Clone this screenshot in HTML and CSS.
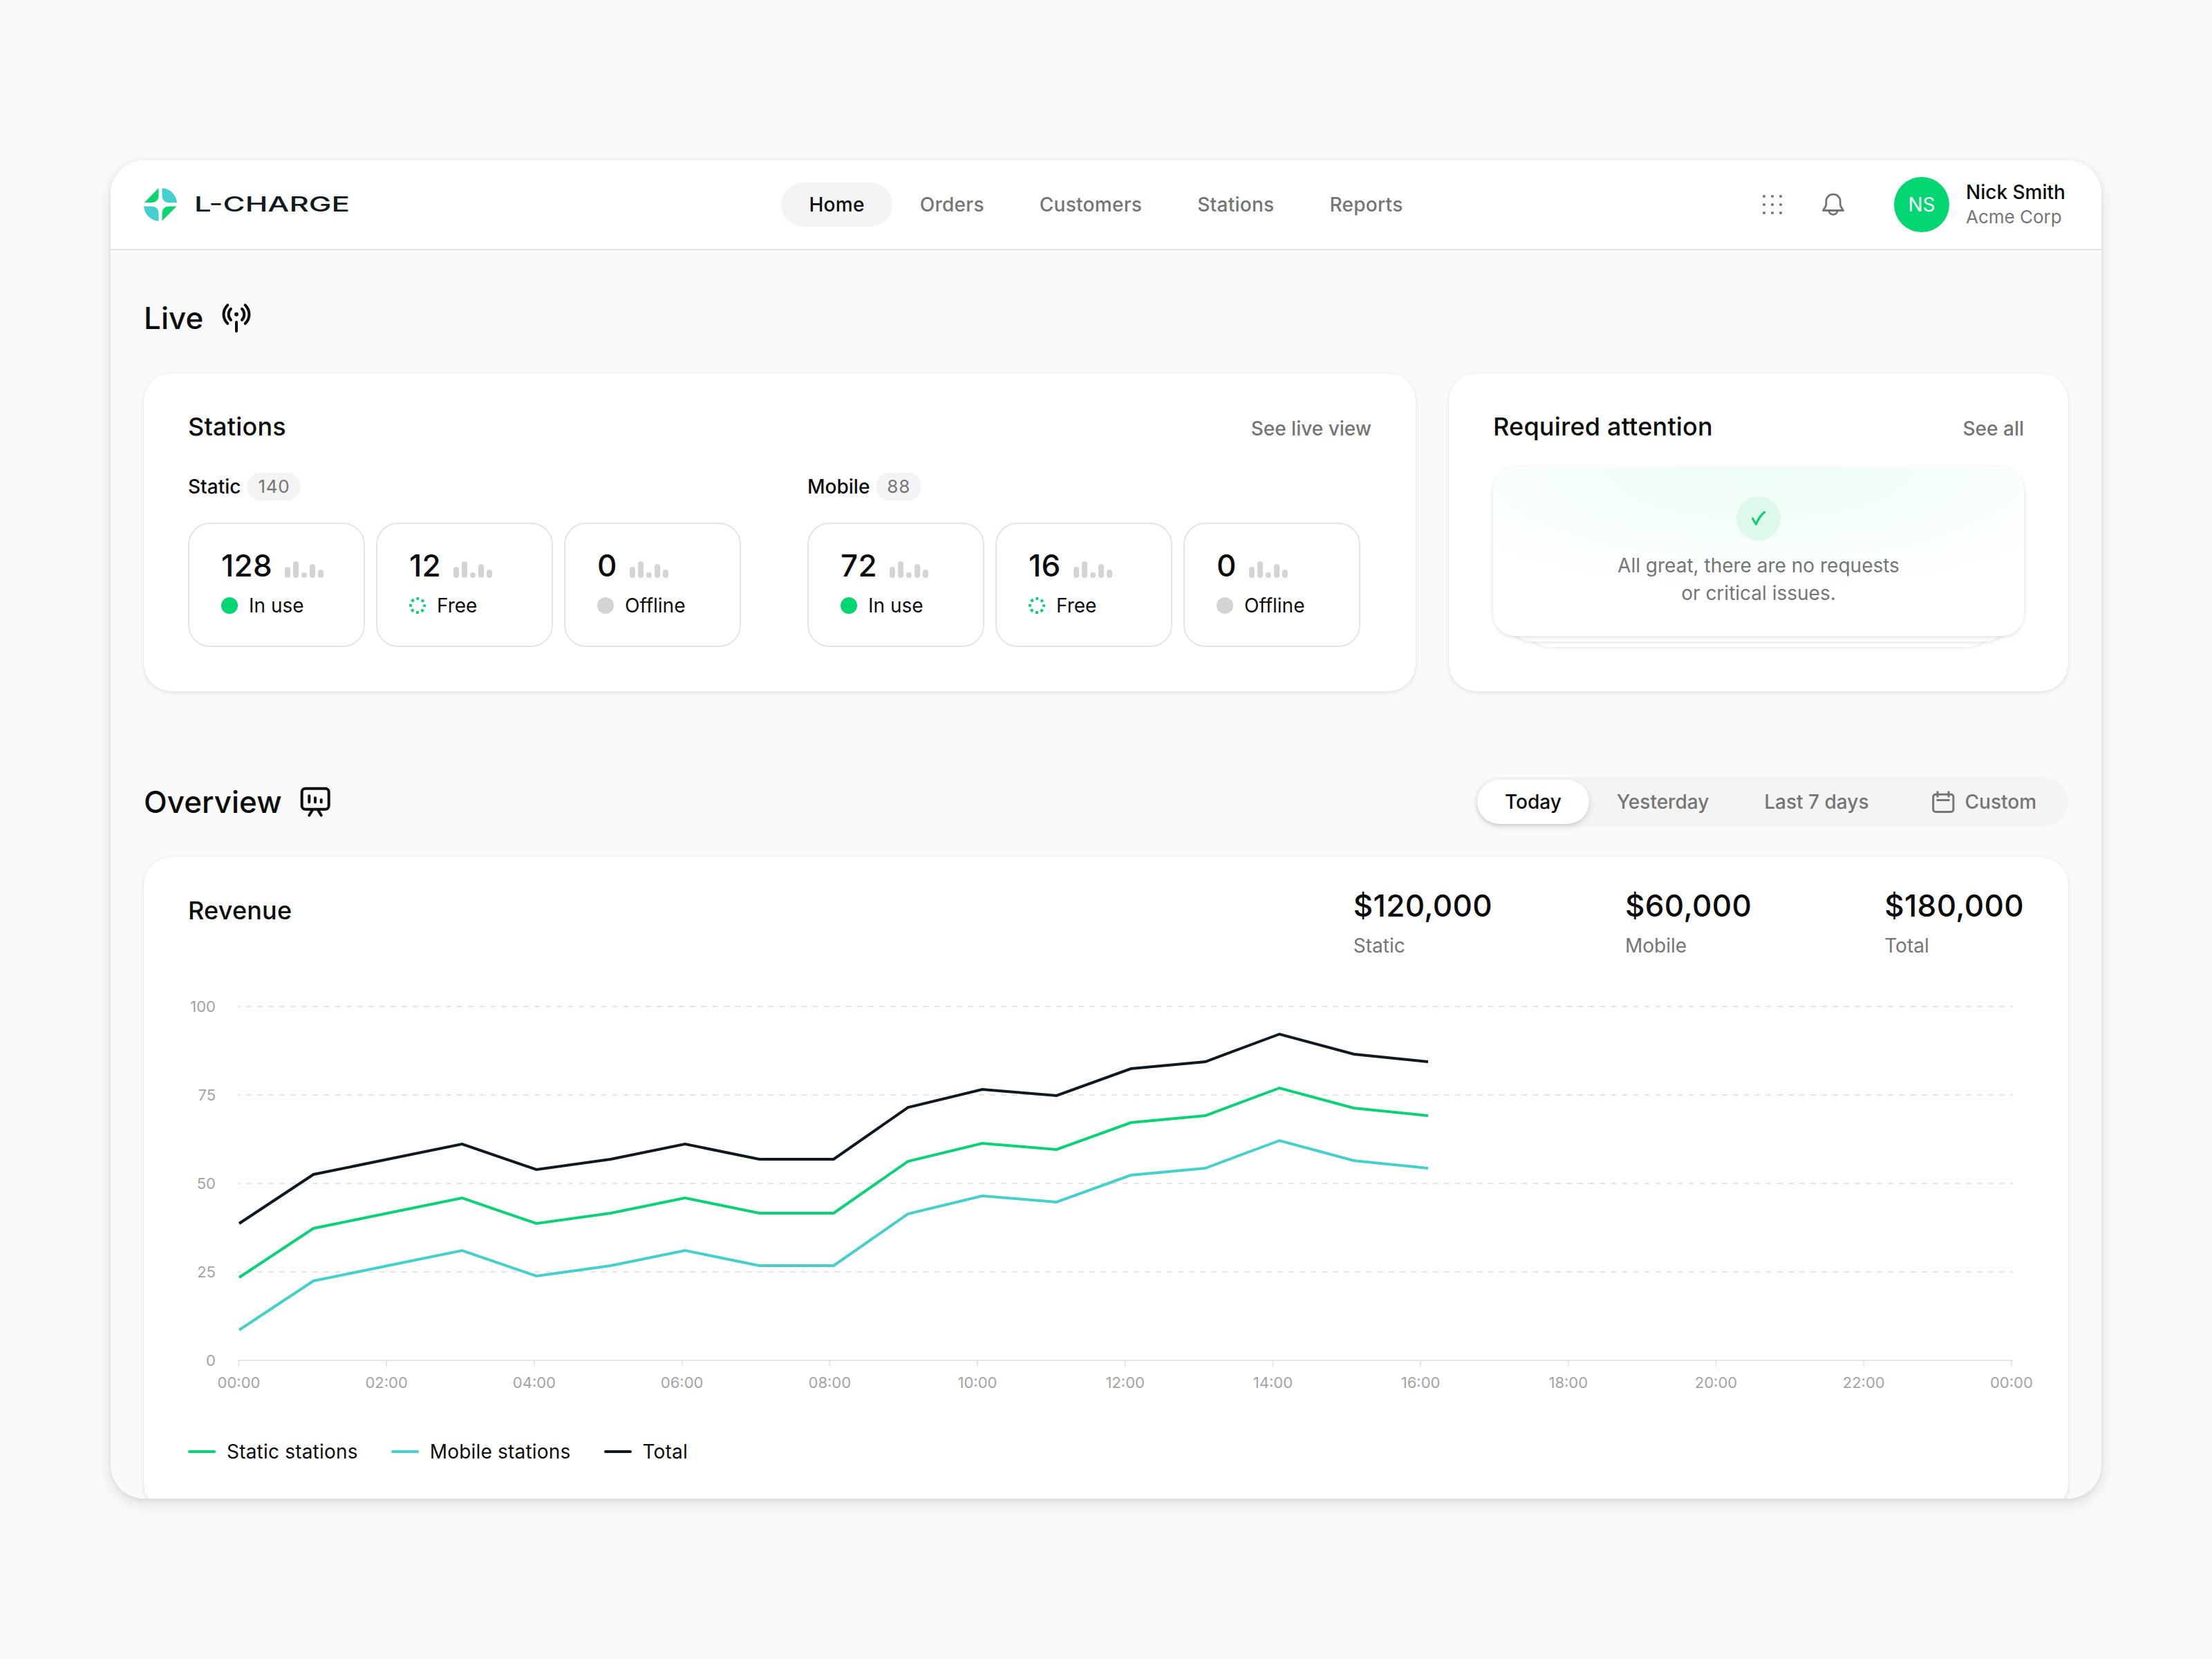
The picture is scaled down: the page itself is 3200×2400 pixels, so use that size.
FILE: index.html
```html
<!DOCTYPE html>
<html lang="en">
<head>
<meta charset="utf-8">
<title>L-Charge dashboard</title>
<link rel="stylesheet" href="styles.css">
</head>

<body>
<div class="window">

	<!-- top bar -->
	<header class="topbar">
		<a class="logo" href="#">
			<svg class="logo-mark" viewBox="0 0 48 48">
				<path fill="#0bd56f" d="M21.5 0v11c0 6-4 10-10 10H.8z"/>
				<path fill="#45d0cf" d="M26.5 0C38 .8 47.2 10 48 21.2H37c-6.5 0-10.5-4-10.5-10z"/>
				<path fill="#45d0cf" d="M0 26.5h11c6.5 0 10.5 4 10.5 10.5v11C10 47 .8 38 0 26.5z"/>
				<path fill="#0bd56f" d="M26.5 47.5V37c0-6.5 4-10.5 10.5-10.5h10.5z"/>
			</svg>
			<svg class="logo-text" viewBox="0 0 226 32">
				<text x="0" y="27" textLength="225" lengthAdjust="spacingAndGlyphs">L-CHARGE</text>
			</svg>
		</a>
		<nav class="nav">
			<a class="nav-item active" href="#">Home</a>
			<a class="nav-item" href="#">Orders</a>
			<a class="nav-item" href="#">Customers</a>
			<a class="nav-item" href="#">Stations</a>
			<a class="nav-item" href="#">Reports</a>
		</nav>
		<div class="user">
			<svg class="icon apps" viewBox="0 0 40 40" fill="#757575">
				<circle cx="8" cy="8" r="2.1"/><circle cx="20" cy="8" r="2.1"/><circle cx="32" cy="8" r="2.1"/>
				<circle cx="8" cy="20" r="2.1"/><circle cx="20" cy="20" r="2.1"/><circle cx="32" cy="20" r="2.1"/>
				<circle cx="8" cy="32" r="2.1"/><circle cx="20" cy="32" r="2.1"/><circle cx="32" cy="32" r="2.1"/>
			</svg>
			<svg class="icon bell" viewBox="0 0 40 40" fill="none" stroke="#757575" stroke-width="2.8" stroke-linejoin="round">
				<path d="M20 5.2c-5.8 0-10.2 4.3-10.2 10v4.3c0 1.300-.3 2.2-1 3.500l-3.300 5.500h29L31.200 23c-.7-1.300-1-2.200-1-3.500v-4.300c0-5.700-4.400-10-10.200-10z"/>
				<path d="M13.8 29c.8 3.5 3.2 5.4 6.2 5.4s5.4-1.9 6.200-5.4"/>
			</svg>
			<div class="avatar">NS</div>
			<div class="user-info">
				<div class="user-name">Nick Smith</div>
				<div class="user-company">Acme Corp</div>
			</div>
		</div>
	</header>

	<main class="content">

		<!-- live -->
		<div class="section-head">
			<h1>Live</h1>
			<svg class="section-icon" viewBox="0 0 48 48" fill="none" stroke="#0c0c0d" stroke-width="4" stroke-linecap="round">
				<path d="M11.3 5.3C3.600 13 3.600 24.500 11.300 32M16 10.800c-4.400 4-4.400 12 0 16M36.700 5.300c7.700 7.700 7.700 19.200 0 26.700M32 10.800c4.400 4 4.400 12 0 16M24 30v13"/>
				<circle cx="24" cy="18.7" r="2.9" fill="#0c0c0d" stroke="none"/>
			</svg>
		</div>

		<div class="live">
			<section class="card">
				<div class="card-head">
					<h2>Stations</h2>
					<a class="link" href="#">See live view</a>
				</div>
				<div class="groups">
					<div class="group">
						<div class="group-label">Static <span class="count">140</span></div>
						<div class="tiles">
							<div class="tile">
								<div class="tile-value">128 <span class="bars"><i class="b4"></i><i class="b6"></i><i class="b2"></i><i class="b5"></i><i class="b3"></i></span></div>
								<div class="tile-status"><span class="dot green"></span>In use</div>
							</div>
							<div class="tile">
								<div class="tile-value">12 <span class="bars"><i class="b4"></i><i class="b6"></i><i class="b2"></i><i class="b5"></i><i class="b3"></i></span></div>
								<div class="tile-status"><svg class="ring" viewBox="0 0 24 24"><circle cx="12" cy="12" r="10"/></svg>Free</div>
							</div>
							<div class="tile">
								<div class="tile-value">0 <span class="bars"><i class="b4"></i><i class="b6"></i><i class="b2"></i><i class="b5"></i><i class="b3"></i></span></div>
								<div class="tile-status"><span class="dot grey"></span>Offline</div>
							</div>
						</div>
					</div>
					<div class="group">
						<div class="group-label">Mobile <span class="count">88</span></div>
						<div class="tiles">
							<div class="tile">
								<div class="tile-value">72 <span class="bars"><i class="b4"></i><i class="b6"></i><i class="b2"></i><i class="b5"></i><i class="b3"></i></span></div>
								<div class="tile-status"><span class="dot green"></span>In use</div>
							</div>
							<div class="tile">
								<div class="tile-value">16 <span class="bars"><i class="b4"></i><i class="b6"></i><i class="b2"></i><i class="b5"></i><i class="b3"></i></span></div>
								<div class="tile-status"><svg class="ring" viewBox="0 0 24 24"><circle cx="12" cy="12" r="10"/></svg>Free</div>
							</div>
							<div class="tile">
								<div class="tile-value">0 <span class="bars"><i class="b4"></i><i class="b6"></i><i class="b2"></i><i class="b5"></i><i class="b3"></i></span></div>
								<div class="tile-status"><span class="dot grey"></span>Offline</div>
							</div>
						</div>
					</div>
				</div>
			</section>

			<section class="card">
				<div class="card-head">
					<h2>Required attention</h2>
					<a class="link" href="#">See all</a>
				</div>
				<div class="stack">
					<div class="stack-card">
						<div class="check">
							<svg viewBox="0 0 24 24" fill="none" stroke="#08cf6f" stroke-width="3" stroke-linecap="round" stroke-linejoin="round"><path d="M3.5 12.2l5 8.3C11 14 15 7.5 20.5 3"/></svg>
						</div>
						<p>All great, there are no requests<br>or critical issues.</p>
					</div>
					<div class="stack-layer second"></div>
					<div class="stack-layer third"></div>
				</div>
			</section>
		</div>

		<!-- overview -->
		<div class="section-head overview-head">
			<h1>Overview</h1>
			<svg class="section-icon" viewBox="0 0 48 48" fill="none" stroke="#0c0c0d" stroke-width="4" stroke-linecap="round">
				<rect x="4.7" y="4.7" width="39" height="30" rx="5"/>
				<path d="M15.3 15.3v9.2M24 18.3v6.2M32.7 21v3.500M19.5 36.5L15.3 43.500M28.5 36.5L32.7 43.500"/>
			</svg>
			<div class="period">
				<span class="period-item active">Today</span>
				<span class="period-item">Yesterday</span>
				<span class="period-item">Last 7 days</span>
				<span class="period-item custom">
					<svg class="icon" viewBox="0 0 40 40" fill="none" stroke="#757575" stroke-width="3">
						<rect x="5.7" y="9.3" width="29.2" height="25.2" rx="3.5"/>
						<path d="M12 4.5v9M28 4.5v9M10.5 17.5h19"/>
					</svg>Custom
				</span>
			</div>
		</div>

		<section class="card revenue">
			<div class="revenue-head">
				<h2>Revenue</h2>
				<div class="stats">
					<div class="stat"><b>$120,000</b><span>Static</span></div>
					<div class="stat"><b>$60,000</b><span>Mobile</span></div>
					<div class="stat"><b>$180,000</b><span>Total</span></div>
				</div>
			</div>

			<svg class="chart" width="2656" height="576" viewBox="0 0 2656 576">
				<path class="grid" d="M72 16H2640M72 144H2640M72 272H2640M72 400H2640"/>
				<path class="axis" d="M72 528H2640M73.5 528v9M287.2 528v9M500.9 528v9M714.6 528v9M928.3 528v9M1142 528v9M1355.7 528v9M1569.4 528v9M1783.1 528v9M1996.8 528v9M2210.5 528v9M2424.2 528v9M2637.9 528v9"/>
				<g class="ylabels">
					<text x="40" y="24">100</text>
					<text x="40" y="152">75</text>
					<text x="40" y="280">50</text>
					<text x="40" y="408">25</text>
					<text x="40" y="536">0</text>
				</g>
				<g class="xlabels">
					<text x="73.5" y="568">00:00</text>
					<text x="287.2" y="568">02:00</text>
					<text x="500.9" y="568">04:00</text>
					<text x="714.6" y="568">06:00</text>
					<text x="928.3" y="568">08:00</text>
					<text x="1142" y="568">10:00</text>
					<text x="1355.7" y="568">12:00</text>
					<text x="1569.4" y="568">14:00</text>
					<text x="1783.1" y="568">16:00</text>
					<text x="1996.8" y="568">18:00</text>
					<text x="2210.5" y="568">20:00</text>
					<text x="2424.2" y="568">22:00</text>
					<text x="2637.9" y="568">00:00</text>
				</g>
				<polyline class="line teal" points="74,484 181.5,413 289,391 396.5,369 504,406 611.5,391 719,369 826.5,391 934,391 1041.5,316 1149,290 1256.5,299 1364,260 1471.5,250 1579,210 1686.5,239 1794,250"/>
				<polyline class="line green" points="74,408 181.5,337 289,315 396.5,293 504,330 611.5,315 719,293 826.5,315 934,315 1041.5,240 1149,214 1256.5,223 1364,184 1471.5,174 1579,134 1686.5,163 1794,174"/>
				<polyline class="line black" points="74,330 181.5,259 289,237 396.5,215 504,252 611.5,237 719,215 826.5,237 934,237 1041.5,162 1149,136 1256.5,145 1364,106 1471.5,96 1579,56 1686.5,85 1794,96"/>
			</svg>

			<div class="legend">
				<span class="legend-item green">Static stations</span>
				<span class="legend-item teal">Mobile stations</span>
				<span class="legend-item black">Total</span>
			</div>
		</section>

	</main>
</div>
</body>
</html>
```
FILE: styles.css
```css
* {
	box-sizing: border-box;
}

body {
	margin: 0;
	padding: 232px 160px;
	height: 2400px;
	background: #fafafa;
	color: #0c0c0d;
	font: 28px/40px Inter, sans-serif;
}

a {
	color: inherit;
	text-decoration: none;
}

h1, h2, p {
	margin: 0;
	font-weight: 500;
}

h1 {
	font-size: 44px;
	line-height: 56px;
}

h2 {
	font-size: 36px;
	line-height: 50px;
	letter-spacing: 0.2px;
}

svg {
	display: block;
	flex: none;
}

.window {
	height: 1936px;
	overflow: hidden;
	border-radius: 48px;
	background: #fafafa;
	box-shadow: 0 8px 24px rgba(0, 0, 0, 0.1), 0 2px 6px rgba(0, 0, 0, 0.08);
}

/* top bar */
.topbar {
	display: grid;
	grid-template-columns: 1fr auto 1fr;
	align-items: center;
	height: 130px;
	padding: 0 48px;
	background: #fff;
	border-bottom: 2px solid #e5e5e5;
}

.logo {
	display: flex;
	align-items: center;
	gap: 25px;
}

.logo-mark {
	width: 48px;
	height: 48px;
}

.logo-text {
	width: 226px;
	height: 32px;
	margin-bottom: 3px;
	overflow: visible;
	font-size: 30px;
	font-weight: 500;
	fill: #101820;
}

.nav {
	display: flex;
}

.nav-item {
	padding: 12px 40px;
	border-radius: 32px;
	color: #757575;
	font-weight: 500;
	letter-spacing: 0.28px;
}

.nav-item.active {
	background: #f4f4f4;
	color: #0c0c0d;
}

.user {
	display: flex;
	align-items: center;
	justify-content: flex-end;
}

.icon {
	width: 40px;
	height: 40px;
}

.bell {
	margin: 0 68px 0 48px;
}

.avatar {
	width: 80px;
	height: 80px;
	border-radius: 50%;
	background: #02d672;
	color: #fff;
	line-height: 80px;
	text-align: center;
}

.user-info {
	width: 148px;
	margin-left: 24px;
	white-space: nowrap;
}

.user-name {
	font-weight: 500;
	line-height: 36px;
}

.user-company {
	color: #757575;
	font-size: 26px;
	line-height: 36px;
}

/* sections */
.content {
	padding: 70px 48px 0;
}

.section-head {
	display: flex;
	align-items: center;
	gap: 24px;
}

.section-icon {
	width: 48px;
	height: 48px;
}

.card {
	padding: 52px 64px 64px;
	border-radius: 40px;
	background: #fff;
	box-shadow: 0 2px 6px rgba(0, 0, 0, 0.1), 0 0 2px rgba(0, 0, 0, 0.04);
}

.card-head {
	display: flex;
	align-items: baseline;
	justify-content: space-between;
	height: 50px;
}

.link {
	color: #757575;
	font-weight: 500;
}

.live {
	display: grid;
	grid-template-columns: 1840px 896px;
	gap: 48px;
	height: 460px;
	margin-top: 52px;
}

/* stations */
.groups {
	display: flex;
	gap: 96px;
	margin-top: 42px;
}

.group-label {
	display: flex;
	align-items: center;
	gap: 9px;
	font-weight: 500;
}

.count {
	padding: 0 16px;
	border-radius: 20px;
	background: #f4f4f4;
	color: #757575;
	font-size: 26px;
	font-weight: 400;
	letter-spacing: 0.7px;
}

.tiles {
	display: flex;
	gap: 16px;
	margin-top: 32px;
}

.tile {
	width: 256px;
	height: 180px;
	padding: 32px 46px;
	border: 2px solid #e5e5e5;
	border-radius: 32px;
}

.tile-value {
	display: flex;
	align-items: flex-end;
	gap: 18px;
	font-size: 44px;
	font-weight: 500;
	line-height: 56px;
	letter-spacing: 0.3px;
}

.bars {
	display: flex;
	align-items: flex-end;
	gap: 4px;
	margin-bottom: 10px;
}

.bars i {
	width: 8px;
	border-radius: 4px;
	background: #d4d4d4;
}

.b2 { height: 8px; }
.b3 { height: 12px; }
.b4 { height: 16px; }
.b5 { height: 20px; }
.b6 { height: 24px; }

.tile-status {
	display: flex;
	align-items: center;
	gap: 16px;
	margin-top: 10px;
}

.dot {
	width: 24px;
	height: 24px;
	border-radius: 50%;
}

.dot.green {
	background: #02d672;
}

.dot.grey {
	background: #d4d4d4;
}

.ring {
	width: 24px;
	height: 24px;
	fill: none;
	stroke: #08cf78;
	stroke-width: 4;
	stroke-dasharray: 4 3.854;
	stroke-dashoffset: 2;
}

/* required attention */
.stack {
	display: flex;
	flex-direction: column;
	align-items: center;
	margin-top: 34px;
}

.stack-card {
	z-index: 3;
	display: flex;
	flex-direction: column;
	align-items: center;
	gap: 16px;
	width: 768px;
	height: 244px;
	padding-top: 42px;
	border-radius: 32px;
	background: radial-gradient(ellipse 560px 190px at 50% 0, #edfdf5, #fff) #fff;
	box-shadow: 0 2px 6px rgba(0, 0, 0, 0.12);
	color: #757575;
	text-align: center;
}

.stack-card p {
	font-weight: 400;
}

.stack-layer {
	height: 40px;
	margin-top: -32px;
	border-radius: 0 0 32px 32px;
	background: #fff;
	box-shadow: 0 2px 5px rgba(0, 0, 0, 0.1);
}

.stack-layer.second {
	z-index: 2;
	width: 720px;
}

.stack-layer.third {
	z-index: 1;
	width: 672px;
	box-shadow: 0 1px 4px rgba(0, 0, 0, 0.1);
}

.check {
	display: flex;
	align-items: center;
	justify-content: center;
	width: 64px;
	height: 64px;
	border-radius: 50%;
	background: #dcf9ea;
}

.check svg {
	width: 24px;
	height: 24px;
}

/* overview */
.overview-head {
	height: 72px;
	margin: 124px 0 44px;
}

.period {
	display: flex;
	margin-left: auto;
	padding: 4px;
	border-radius: 36px;
	background: #f4f4f4;
}

.period-item {
	display: flex;
	gap: 12px;
	padding: 12px 40px;
	border-radius: 32px;
	color: #757575;
	font-weight: 500;
}

.period-item.active {
	background: #fff;
	box-shadow: 0 4px 10px rgba(0, 0, 0, 0.12), 0 1px 3px rgba(0, 0, 0, 0.08);
	color: #0c0c0d;
}

.period-item.custom {
	padding: 12px 42px 12px 47px;
}

.revenue {
	height: 946px;
	padding-top: 42px;
}

.revenue-head {
	display: flex;
	justify-content: space-between;
}

.revenue-head h2 {
	margin-top: 10px;
}

.stats {
	display: flex;
	gap: 192px;
}

.stat b {
	display: block;
	margin-bottom: 10px;
	font-size: 44px;
	font-weight: 500;
	line-height: 56px;
	letter-spacing: 0.35px;
}

.stat span {
	display: block;
	color: #757575;
}

/* chart */
.chart {
	margin-top: 52px;
	overflow: visible;
	font-size: 22px;
}

.grid {
	stroke: #e5e5e5;
	stroke-width: 2;
	stroke-dasharray: 8.025;
	stroke-dashoffset: 4;
}

.axis {
	stroke: #e5e5e5;
	stroke-width: 2;
}

.ylabels {
	fill: #a3a3a3;
	text-anchor: end;
}

.xlabels {
	fill: #a3a3a3;
	text-anchor: middle;
}

.line {
	fill: none;
	stroke-width: 4;
}

.line.green { stroke: #0ad277; }
.line.teal { stroke: #45d0cb; }
.line.black { stroke: #101820; }

.legend {
	display: flex;
	gap: 48px;
	margin-top: 64px;
	letter-spacing: 0.2px;
}

.legend-item {
	display: flex;
	align-items: center;
	gap: 16px;
}

.legend-item::before {
	content: "";
	width: 40px;
	height: 4px;
	border-radius: 2px;
}

.legend-item.green::before { background: #0ad277; }
.legend-item.teal::before { background: #45d0cb; }
.legend-item.black::before { background: #101820; }
```
